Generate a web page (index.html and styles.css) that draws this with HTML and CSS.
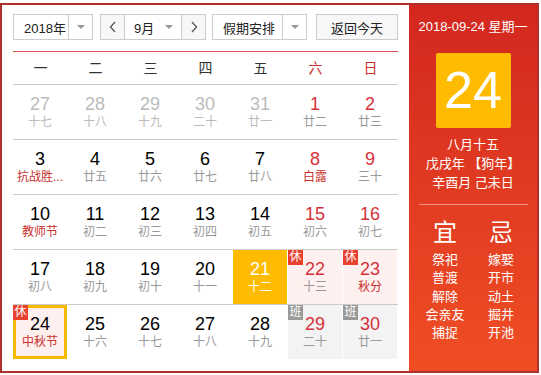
FILE: index.html
```html
<!DOCTYPE html>
<html lang="zh-CN">
<head>
    <meta charset="UTF-8">
    <meta name="viewport" content="width=device-width, initial-scale=1.0">
    <title>万年历</title>
    <link rel="stylesheet" href="styles.css">
</head>
<body>
    <div class="calendar">
        <div class="main">
            <div class="toolbar">
                <div class="select year-select">
                    <span class="select-text">2018年</span>
                    <span class="select-arrow"><i class="caret"></i></span>
                </div>

                <div class="select month-select">
                    <span class="nav-btn">
                        <svg width="8" height="12" viewBox="0 0 8 12"><polyline points="6,1 1.5,6 6,11" fill="none" stroke="#555" stroke-width="1.3"/></svg>
                    </span>
                    <span class="select-text month-text">9月</span>
                    <span class="month-caret"><i class="caret"></i></span>
                    <span class="nav-btn">
                        <svg width="8" height="12" viewBox="0 0 8 12"><polyline points="2,1 6.5,6 2,11" fill="none" stroke="#555" stroke-width="1.3"/></svg>
                    </span>
                </div>

                <div class="select holiday-select">
                    <span class="select-text">假期安排</span>
                    <span class="select-arrow"><i class="caret"></i></span>
                </div>

                <button class="today-btn">返回今天</button>
            </div>

            <div class="week-head">
                <span>一</span><span>二</span><span>三</span><span>四</span><span>五</span>
                <span class="weekend">六</span><span class="weekend">日</span>
            </div>

            <div class="days">
                <div class="week">
                    <div class="day other"><span class="num">27</span><span class="lunar">十七</span></div>
                    <div class="day other"><span class="num">28</span><span class="lunar">十八</span></div>
                    <div class="day other"><span class="num">29</span><span class="lunar">十九</span></div>
                    <div class="day other"><span class="num">30</span><span class="lunar">二十</span></div>
                    <div class="day other"><span class="num">31</span><span class="lunar">廿一</span></div>
                    <div class="day weekend"><span class="num">1</span><span class="lunar">廿二</span></div>
                    <div class="day weekend"><span class="num">2</span><span class="lunar">廿三</span></div>
                </div>
                <div class="week">
                    <div class="day"><span class="num">3</span><span class="lunar festival">抗战胜...</span></div>
                    <div class="day"><span class="num">4</span><span class="lunar">廿五</span></div>
                    <div class="day"><span class="num">5</span><span class="lunar">廿六</span></div>
                    <div class="day"><span class="num">6</span><span class="lunar">廿七</span></div>
                    <div class="day"><span class="num">7</span><span class="lunar">廿八</span></div>
                    <div class="day weekend"><span class="num">8</span><span class="lunar festival">白露</span></div>
                    <div class="day weekend"><span class="num">9</span><span class="lunar">三十</span></div>
                </div>
                <div class="week">
                    <div class="day"><span class="num">10</span><span class="lunar festival">教师节</span></div>
                    <div class="day"><span class="num">11</span><span class="lunar">初二</span></div>
                    <div class="day"><span class="num">12</span><span class="lunar">初三</span></div>
                    <div class="day"><span class="num">13</span><span class="lunar">初四</span></div>
                    <div class="day"><span class="num">14</span><span class="lunar">初五</span></div>
                    <div class="day weekend"><span class="num">15</span><span class="lunar">初六</span></div>
                    <div class="day weekend"><span class="num">16</span><span class="lunar">初七</span></div>
                </div>
                <div class="week">
                    <div class="day"><span class="num">17</span><span class="lunar">初八</span></div>
                    <div class="day"><span class="num">18</span><span class="lunar">初九</span></div>
                    <div class="day"><span class="num">19</span><span class="lunar">初十</span></div>
                    <div class="day"><span class="num">20</span><span class="lunar">十一</span></div>
                    <div class="day selected"><span class="num">21</span><span class="lunar">十二</span></div>
                    <div class="day weekend rest"><i class="badge">休</i><span class="num">22</span><span class="lunar">十三</span></div>
                    <div class="day weekend rest"><i class="badge">休</i><span class="num">23</span><span class="lunar festival">秋分</span></div>
                </div>
                <div class="week">
                    <div class="day rest today"><i class="badge">休</i><span class="num">24</span><span class="lunar festival">中秋节</span></div>
                    <div class="day"><span class="num">25</span><span class="lunar">十六</span></div>
                    <div class="day"><span class="num">26</span><span class="lunar">十七</span></div>
                    <div class="day"><span class="num">27</span><span class="lunar">十八</span></div>
                    <div class="day"><span class="num">28</span><span class="lunar">十九</span></div>
                    <div class="day weekend work"><i class="badge">班</i><span class="num">29</span><span class="lunar">二十</span></div>
                    <div class="day weekend work"><i class="badge">班</i><span class="num">30</span><span class="lunar">廿一</span></div>
                </div>
            </div>
        </div>

        <div class="side">
            <div class="side-date">2018-09-24 星期一</div>
            <div class="big-day">24</div>
            <div class="side-lunar">
                <div>八月十五</div>
                <div>戊戌年 【狗年】</div>
                <div>辛酉月 己未日</div>
            </div>
            <div class="side-line"></div>
            <div class="yiji">
                <div class="yiji-col">
                    <div class="yiji-title">宜</div>
                    <div>祭祀</div>
                    <div>普渡</div>
                    <div>解除</div>
                    <div>会亲友</div>
                    <div>捕捉</div>
                </div>
                <div class="yiji-col">
                    <div class="yiji-title">忌</div>
                    <div>嫁娶</div>
                    <div>开市</div>
                    <div>动土</div>
                    <div>掘井</div>
                    <div>开池</div>
                </div>
            </div>
        </div>
    </div>
</body>
</html>
```

FILE: styles.css
```css
body {
    margin: 0;
    background: #fff;
    font-family: "Liberation Sans", "Noto Sans CJK SC", sans-serif;
    color: #000;
}

.calendar {
    display: flex;
    width: 535px;
    height: 366px;
    margin-top: 3px;
    border: 2px solid #b0302c; /* dark red frame */
}

/* left part */
.main {
    width: 385px;
    padding: 9px 11px 0 11px;
}

.toolbar {
    display: flex;
    height: 26px;
    padding-bottom: 11px;
    border-bottom: 1px solid #d9534f;
}

.select {
    display: flex;
    height: 26px;
    box-sizing: border-box;
    border: 1px solid #ccc;
    background: #fff;
    font-size: 13px;
    color: #222;
}

.select-text {
    display: flex;
    align-items: center;
    flex: 1;
    padding-left: 10px;
}

.select-arrow {
    display: flex;
    align-items: center;
    justify-content: center;
    width: 23px;
    border-left: 1px solid #ccc;
}

.caret {
    display: block;
    width: 0;
    height: 0;
    border-left: 4px solid transparent;
    border-right: 4px solid transparent;
    border-top: 4px solid #999;
}

.year-select {
    width: 80px;
}

.month-select {
    width: 106px;
    margin-left: 7px;
}

.nav-btn {
    display: flex;
    align-items: center;
    justify-content: center;
    width: 23px;
    background: #f7f7f7;
}

.nav-btn:first-child {
    border-right: 1px solid #ccc;
}

.nav-btn:last-child {
    border-left: 1px solid #ccc;
}

.month-text {
    padding-left: 9px;
}

.month-caret {
    display: flex;
    align-items: center;
    padding-right: 8px;
}

.holiday-select {
    width: 95px;
    margin-left: 6px;
}

.today-btn {
    width: 82px;
    height: 26px;
    margin-left: 9px;
    padding: 0;
    border: 1px solid #ccc;
    background: #f7f7f7;
    font-family: inherit;
    font-size: 13px;
    color: #222;
}

.week-head {
    display: grid;
    grid-template-columns: repeat(7, 55px);
    height: 32px;
    border-bottom: 1px solid #ccc;
    font-size: 14px;
    line-height: 32px;
    text-align: center;
    color: #333;
}

.week-head .weekend {
    color: #c9302c;
}

/* day grid */
.week {
    display: grid;
    grid-template-columns: repeat(7, 54px);
    column-gap: 1px;
    height: 54px;
    border-bottom: 1px solid #ccc;
}

.week:last-child {
    border-bottom: none;
}

.day {
    position: relative;
    display: flex;
    flex-direction: column;
    align-items: center;
    padding-top: 9px;
    box-sizing: border-box;
    text-align: center;
}

.num {
    font-size: 18px;
    line-height: 20px;
    color: #000;
}

.lunar {
    font-size: 12px;
    line-height: 16px;
    color: #999;
    white-space: nowrap;
}

.day.other .num,
.day.other .lunar {
    color: #bbb;
}

.day.weekend .num {
    color: #d5313a;
}

.lunar.festival {
    color: #c9302c;
}

.day.selected {
    background: #ffbb00;
}

.day.selected .num,
.day.selected .lunar {
    color: #fff;
}

.day.rest {
    background: #fff0f0;
}

.day.work {
    background: #f3f3f3;
}

.day.today {
    box-shadow: inset 0 0 0 3px #f9b800;
}

.badge {
    position: absolute;
    top: 0;
    left: 0;
    width: 15px;
    height: 15px;
    font-style: normal;
    font-size: 12px;
    line-height: 15px;
    text-align: center;
    color: #fff;
    background: #e8412f;
}

.work .badge {
    background: #999;
}

/* right panel */
.side {
    width: 128px;
    padding-top: 13px;
    background: linear-gradient(#d3271f, #ef4e24);
    color: #fff;
    text-align: center;
}

.side-date {
    font-size: 13px;
    line-height: 18px;
}

.big-day {
    width: 75px;
    height: 75px;
    margin: 17px auto 0 auto;
    border-radius: 2px;
    background: #ffbb00;
    font-size: 52px;
    line-height: 75px;
}

.side-lunar {
    margin-top: 7px;
    font-size: 13px;
    line-height: 19px;
}

.side-line {
    height: 1px;
    margin: 12px 9px 0 10px;
    background: rgba(255, 255, 255, 0.45);
}

.yiji {
    display: flex;
    justify-content: center;
    gap: 4px;
    margin-top: 13px;
    font-size: 13px;
    line-height: 18.3px;
}

.yiji-col {
    width: 52px;
}

.yiji-title {
    font-size: 24px;
    line-height: 30px;
    margin-bottom: 3px;
}
```
